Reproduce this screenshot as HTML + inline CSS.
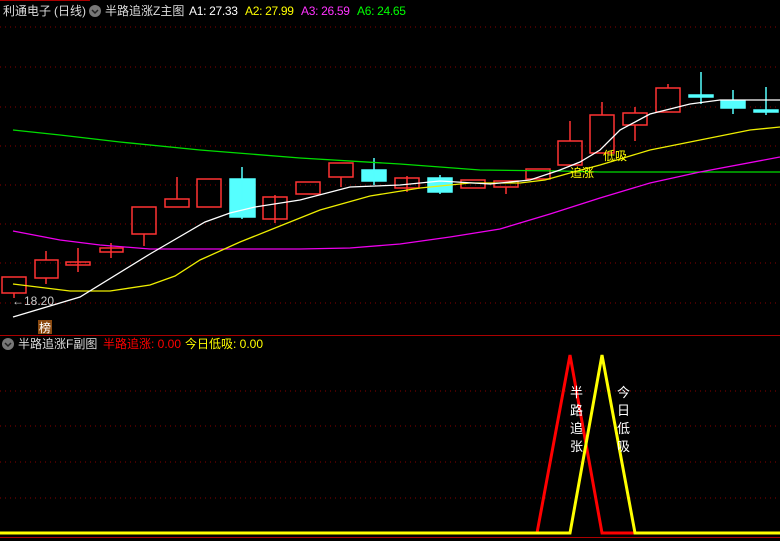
<html><body style="margin:0;background:#000;width:780px;height:541px;overflow:hidden;position:relative;font-family:'Liberation Sans','Noto Sans CJK SC',sans-serif">
<svg width="780" height="541" style="position:absolute;left:0;top:0">
<line x1="0" y1="0.5" x2="90" y2="0.5" stroke="#a00"/>
<g stroke="#800" stroke-dasharray="1,4">
<line x1="0" y1="27" x2="780" y2="27"/><line x1="0" y1="67" x2="780" y2="67"/><line x1="0" y1="107" x2="780" y2="107"/><line x1="0" y1="146" x2="780" y2="146"/><line x1="0" y1="185" x2="780" y2="185"/><line x1="0" y1="224" x2="780" y2="224"/><line x1="0" y1="263" x2="780" y2="263"/><line x1="0" y1="303" x2="780" y2="303"/>
<line x1="0" y1="391" x2="780" y2="391"/><line x1="0" y1="426" x2="780" y2="426"/><line x1="0" y1="462" x2="780" y2="462"/><line x1="0" y1="498" x2="780" y2="498"/>
</g>
<line x1="0" y1="335.5" x2="780" y2="335.5" stroke="#a00"/>
<line x1="0" y1="537.5" x2="780" y2="537.5" stroke="#a00"/>
<g stroke="#f33" stroke-width="1.5" fill="none">
<rect x="2" y="277" width="24" height="16"/><line x1="14" y1="293" x2="14" y2="298"/>
<rect x="35" y="260" width="23" height="18"/><line x1="46" y1="251" x2="46" y2="260"/><line x1="46" y1="278" x2="46" y2="284"/>
<rect x="66" y="262" width="24" height="3"/><line x1="78" y1="248" x2="78" y2="272"/>
<rect x="100" y="248" width="23" height="4"/><line x1="111" y1="243" x2="111" y2="258"/>
<rect x="132" y="207" width="24" height="27"/><line x1="144" y1="234" x2="144" y2="246"/>
<rect x="165" y="199" width="24" height="8"/><line x1="177" y1="177" x2="177" y2="199"/>
<rect x="197" y="179" width="24" height="28"/>
<rect x="263" y="197" width="24" height="22"/><line x1="275" y1="195" x2="275" y2="223"/>
<rect x="296" y="182" width="24" height="12"/>
<rect x="329" y="163" width="24" height="14"/><line x1="341" y1="177" x2="341" y2="187"/>
<rect x="395" y="178" width="24" height="10"/><line x1="407" y1="176" x2="407" y2="192"/>
<rect x="461" y="180" width="24" height="8"/>
<rect x="494" y="181" width="24" height="6"/><line x1="506" y1="187" x2="506" y2="194"/>
<rect x="526" y="169" width="24" height="10"/>
<rect x="558" y="141" width="24" height="24"/><line x1="570" y1="121" x2="570" y2="141"/>
<rect x="590" y="115" width="24" height="38"/><line x1="602" y1="102" x2="602" y2="115"/>
<rect x="623" y="113" width="24" height="12"/><line x1="635" y1="107" x2="635" y2="113"/><line x1="635" y1="125" x2="635" y2="141"/>
<rect x="656" y="88" width="24" height="24"/><line x1="668" y1="84" x2="668" y2="88"/>
</g>
<g fill="#5ff" stroke="#5ff" stroke-width="1.5">
<rect x="230" y="179" width="25" height="38"/><line x1="242" y1="167" x2="242" y2="219"/>
<rect x="362" y="170" width="24" height="11"/><line x1="374" y1="158" x2="374" y2="185"/>
<rect x="428" y="178" width="24" height="14"/><line x1="440" y1="175" x2="440" y2="194"/>
<rect x="689" y="95" width="24" height="2"/><line x1="701" y1="72" x2="701" y2="104"/>
<rect x="721" y="101" width="24" height="7"/><line x1="733" y1="90" x2="733" y2="114"/>
<rect x="754" y="110" width="24" height="2"/><line x1="766" y1="87" x2="766" y2="115"/>
</g>
<g fill="none" stroke-width="1.3">
<polyline stroke="#0d0" points="13,130 60,135 120,142 200,150 300,158 400,164 480,170 560,171 600,172 780,172"/>
<polyline stroke="#e0e" points="13,231 60,240 100,245 150,249 200,249 300,249 350,248 400,244 450,237 500,229 550,214 600,198 650,183 700,172 780,157"/>
<polyline stroke="#ee0" points="13,284 70,291 110,291 150,285 175,276 200,260 240,242 280,226 320,210 370,196 420,188 470,183 520,183 545,180 570,173 600,165 650,150 700,140 750,130 780,127"/>
<polyline stroke="#fff" points="13,317 80,297 150,254 205,222 230,213 255,207 300,200 350,187 400,185 440,181 490,184 530,180 560,170 580,162 600,150 620,130 650,114 690,104 720,100 780,100"/>
</g>
<g fill="none" stroke-width="3">
<polyline stroke="#f00" points="537,533 570,355 602,533 637,533"/>
<polyline stroke="#ff0" points="0,533 570,533 602,355 635,533 780,533"/>
</g>
<g fill="#fff" font-size="13">
<text x="570" y="397">半</text><text x="570" y="415">路</text><text x="570" y="433">追</text><text x="570" y="451">张</text>
<text x="617" y="397">今</text><text x="617" y="415">日</text><text x="617" y="433">低</text><text x="617" y="451">吸</text>
</g>
<text x="570" y="177" fill="#ff0" font-size="12">追涨</text>
<text x="603" y="160" fill="#ff0" font-size="12">低吸</text>
<text x="12" y="305" fill="#ccc" font-size="12">←18.20</text>
<rect x="38" y="320" width="14" height="14" fill="#8b4a10"/>
<text x="39" y="332" fill="#fff" font-size="12">榜</text>
<circle cx="95" cy="11" r="6" fill="#777"/><path d="M92 10 L95 13 L98 10" stroke="#222" fill="none" stroke-width="1.5"/>
<circle cx="8" cy="344" r="6" fill="#777"/><path d="M5 343 L8 346 L11 343" stroke="#222" fill="none" stroke-width="1.5"/>
</svg>
<div style="position:absolute;top:4px;left:0;font-size:12px;color:#ddd;white-space:nowrap;line-height:15px">
<span style="position:absolute;left:3px">利通电子</span><span style="position:absolute;left:54px">(日线)</span>
<span style="position:absolute;left:105px">半路追涨Z主图</span>
<span style="position:absolute;left:189px;color:#fff;letter-spacing:-0.3px">A1: 27.33</span>
<span style="position:absolute;left:245px;color:#ff0;letter-spacing:-0.3px">A2: 27.99</span>
<span style="position:absolute;left:301px;color:#f3f;letter-spacing:-0.3px">A3: 26.59</span>
<span style="position:absolute;left:357px;color:#0f0;letter-spacing:-0.3px">A6: 24.65</span>
</div>
<div style="position:absolute;top:337px;left:0;font-size:12px;color:#ddd;white-space:nowrap;line-height:15px">
<span style="position:absolute;left:18px">半路追涨F副图</span>
<span style="position:absolute;left:103px;color:#f00">半路追涨: 0.00</span>
<span style="position:absolute;left:185px;color:#ff0">今日低吸: 0.00</span>
</div>
</body></html>
